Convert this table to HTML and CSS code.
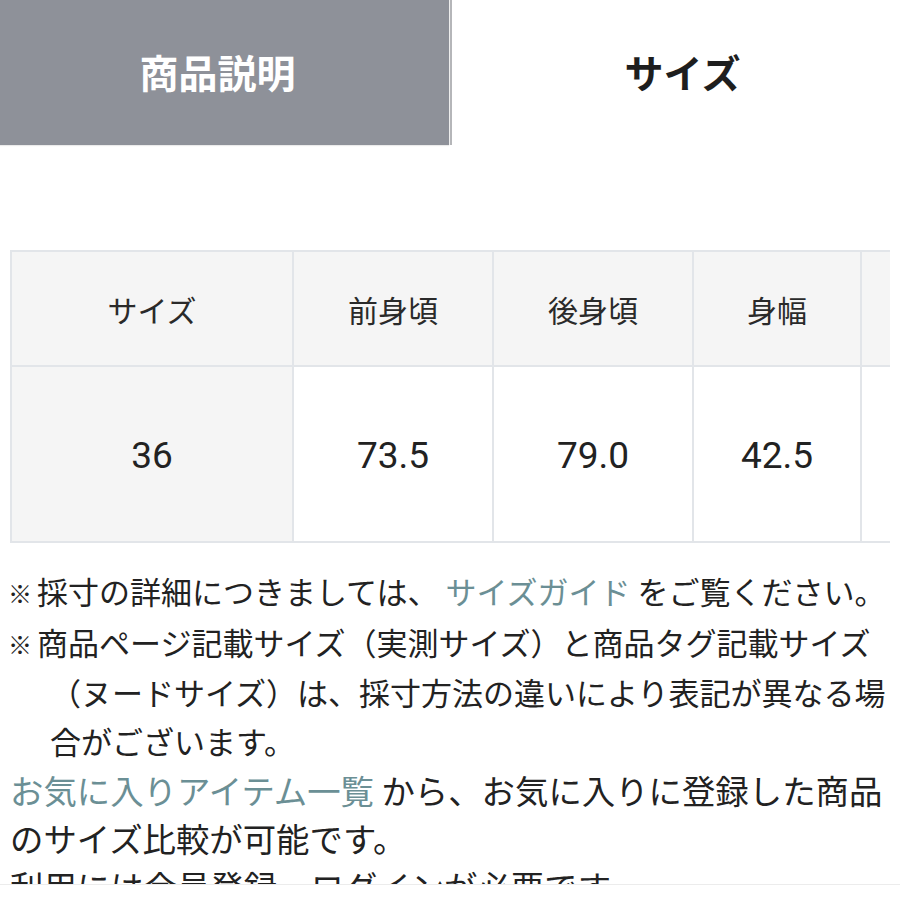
FILE: index.html
```html
<!DOCTYPE html>
<html lang="ja">
<head>
<meta charset="utf-8">
<title>サイズ</title>
<link rel="stylesheet" href="styles.css">
</head>
<body>
<div class="page">
  <div class="tabs">
    <div class="tab tab-off">商品説明</div>
    <div class="tab tab-on">サイズ</div>
  </div>
  <div class="content">
    <div class="table-wrap">
      <table class="size-table">
        <colgroup>
          <col class="c1"><col class="c2"><col class="c3"><col class="c4"><col class="c5">
        </colgroup>
        <tr class="head">
          <th>サイズ</th><th>前身頃</th><th>後身頃</th><th>身幅</th><th>袖丈</th>
        </tr>
        <tr class="data">
          <td class="first">36</td><td>73.5</td><td>79.0</td><td>42.5</td><td>58.0</td>
        </tr>
      </table>
    </div>
    <ul class="notes">
      <li><span class="mark">※</span>採寸の詳細につきましては、 <a class="link">サイズガイド</a> をご覧ください。</li>
      <li><span class="mark">※</span>商品ページ記載サイズ（実測サイズ）と商品タグ記載サイズ（ヌードサイズ）は、採寸方法の違いにより表記が異なる場合がございます。</li>
    </ul>
    <p class="para"><a class="link">お気に入りアイテム一覧</a> から、お気に入りに登録した商品のサイズ比較が可能です。<br>利用には会員登録、ログインが必要です。</p>
  </div>
</div>
<div class="bottom-bar"></div>
</body>
</html>
```
FILE: styles.css
```css
html, body {
  margin: 0;
  padding: 0;
  background: #ffffff;
}
body {
  width: 900px;
  height: 900px;
  overflow: hidden;
  font-family: Roboto, "Noto Sans CJK JP", sans-serif;
  color: #222222;
  text-spacing-trim: space-all;
}
.page {
  height: 884px;
  overflow: hidden;
}
.tabs {
  display: flex;
  height: 145px;
}
.tab {
  display: flex;
  align-items: center;
  justify-content: center;
  font-family: "Noto Sans CJK JP", sans-serif;
  font-weight: 700;
  font-size: 39px;
  padding-bottom: 3px;
  box-sizing: border-box;
}
.tab-off {
  width: 449px;
  background: #8e9199;
  color: #ffffff;
  padding-right: 14px;
  box-shadow: 1px 0 0 #eeeeee, 3px 0 0 #b5b6b9, 0 1px 1px rgba(0,0,0,0.08);
}
.tab-on {
  flex: 1;
  color: #1e1e1e;
  padding-left: 16px;
}
.content {
  padding: 0 10px;
}
.table-wrap {
  margin-top: 105px;
  width: 880px;
  overflow: hidden;
}
.size-table {
  border-collapse: collapse;
  table-layout: fixed;
  width: 1050px;
}
.c1 { width: 282px; }
.c2 { width: 200px; }
.c3 { width: 200px; }
.c4 { width: 168px; }
.c5 { width: 200px; }
.size-table th,
.size-table td {
  border: 2px solid #e2e5e9;
  text-align: center;
  padding: 0;
}
.size-table th {
  height: 113px;
  background: #f5f5f5;
  font-family: "Noto Sans CJK JP", sans-serif;
  font-weight: 400;
  font-size: 30px;
  color: #2a2a2a;
}
.size-table td {
  height: 171px;
  font-family: Roboto, sans-serif;
  font-size: 37px;
  color: #222222;
  background: #ffffff;
  padding-top: 3px;
}
.size-table td.first {
  background: #f5f5f5;
}
.notes {
  list-style: none;
  margin: 24px 0 0 0;
  padding: 0;
  font-family: "Noto Sans CJK JP", sans-serif;
  font-size: 31px;
  line-height: 48.7px;
}
.notes li {
  padding-left: 40px;
  text-indent: -40px;
}
.mark {
  display: inline-block;
  width: 29px;
  margin-left: -2px;
  text-indent: 0;
  font-size: 24px;
  font-weight: 700;
  vertical-align: 1px;
  text-align: left;
}
.link {
  color: #6b8f95;
  text-decoration: none;
}
.para {
  margin: 0;
  font-family: "Noto Sans CJK JP", sans-serif;
  font-size: 33.4px;
  line-height: 48px;
}
.bottom-bar {
  height: 16px;
  border-top: 1px solid #ececec;
  background: #ffffff;
}
```
